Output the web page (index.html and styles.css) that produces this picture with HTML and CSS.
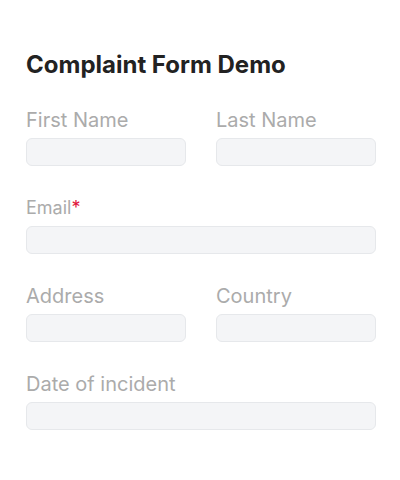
FILE: index.html
```html
<!DOCTYPE html>
<html lang="en">
<head>
<meta charset="utf-8">
<title>Complaint Form Demo</title>
<link rel="stylesheet" href="styles.css">
</head>
<body>
<main class="page">
  <h1 class="title">Complaint Form Demo</h1>
  <form class="form">
    <div class="row two">
      <div class="field">
        <label class="label">First Name</label>
        <div class="input"></div>
      </div>
      <div class="field">
        <label class="label">Last Name</label>
        <div class="input"></div>
      </div>
    </div>
    <div class="row">
      <div class="field">
        <label class="label small">Email<span class="req">*</span></label>
        <div class="input"></div>
      </div>
    </div>
    <div class="row two">
      <div class="field">
        <label class="label">Address</label>
        <div class="input"></div>
      </div>
      <div class="field">
        <label class="label">Country</label>
        <div class="input"></div>
      </div>
    </div>
    <div class="row">
      <div class="field">
        <label class="label">Date of incident</label>
        <div class="input"></div>
      </div>
    </div>
  </form>
</main>
</body>
</html>
```
FILE: styles.css
```css
* { box-sizing: border-box; }
html, body { margin: 0; padding: 0; background: #fff; }
body { font-family: Inter, "Noto Sans", sans-serif; }
.page { padding: 50px 24px 0 26px; }
.title {
  margin: 0 0 30px;
  font-size: 24px;
  line-height: 30px;
  font-weight: 700;
  color: #222;
}
.form { display: flex; flex-direction: column; gap: 32px; }
.row { display: grid; grid-template-columns: 1fr; }
.row.two { grid-template-columns: 1fr 1fr; column-gap: 30px; }
.field { display: flex; flex-direction: column; gap: 8px; }
.label {
  font-size: 20px;
  line-height: 20px;
  color: #ababab;
}
.label.small { font-size: 18px; }
.req { color: #e0143c; }
.input {
  height: 28px;
  background: #f4f5f7;
  border: 1px solid #e6e8eb;
  border-radius: 6px;
}
```
